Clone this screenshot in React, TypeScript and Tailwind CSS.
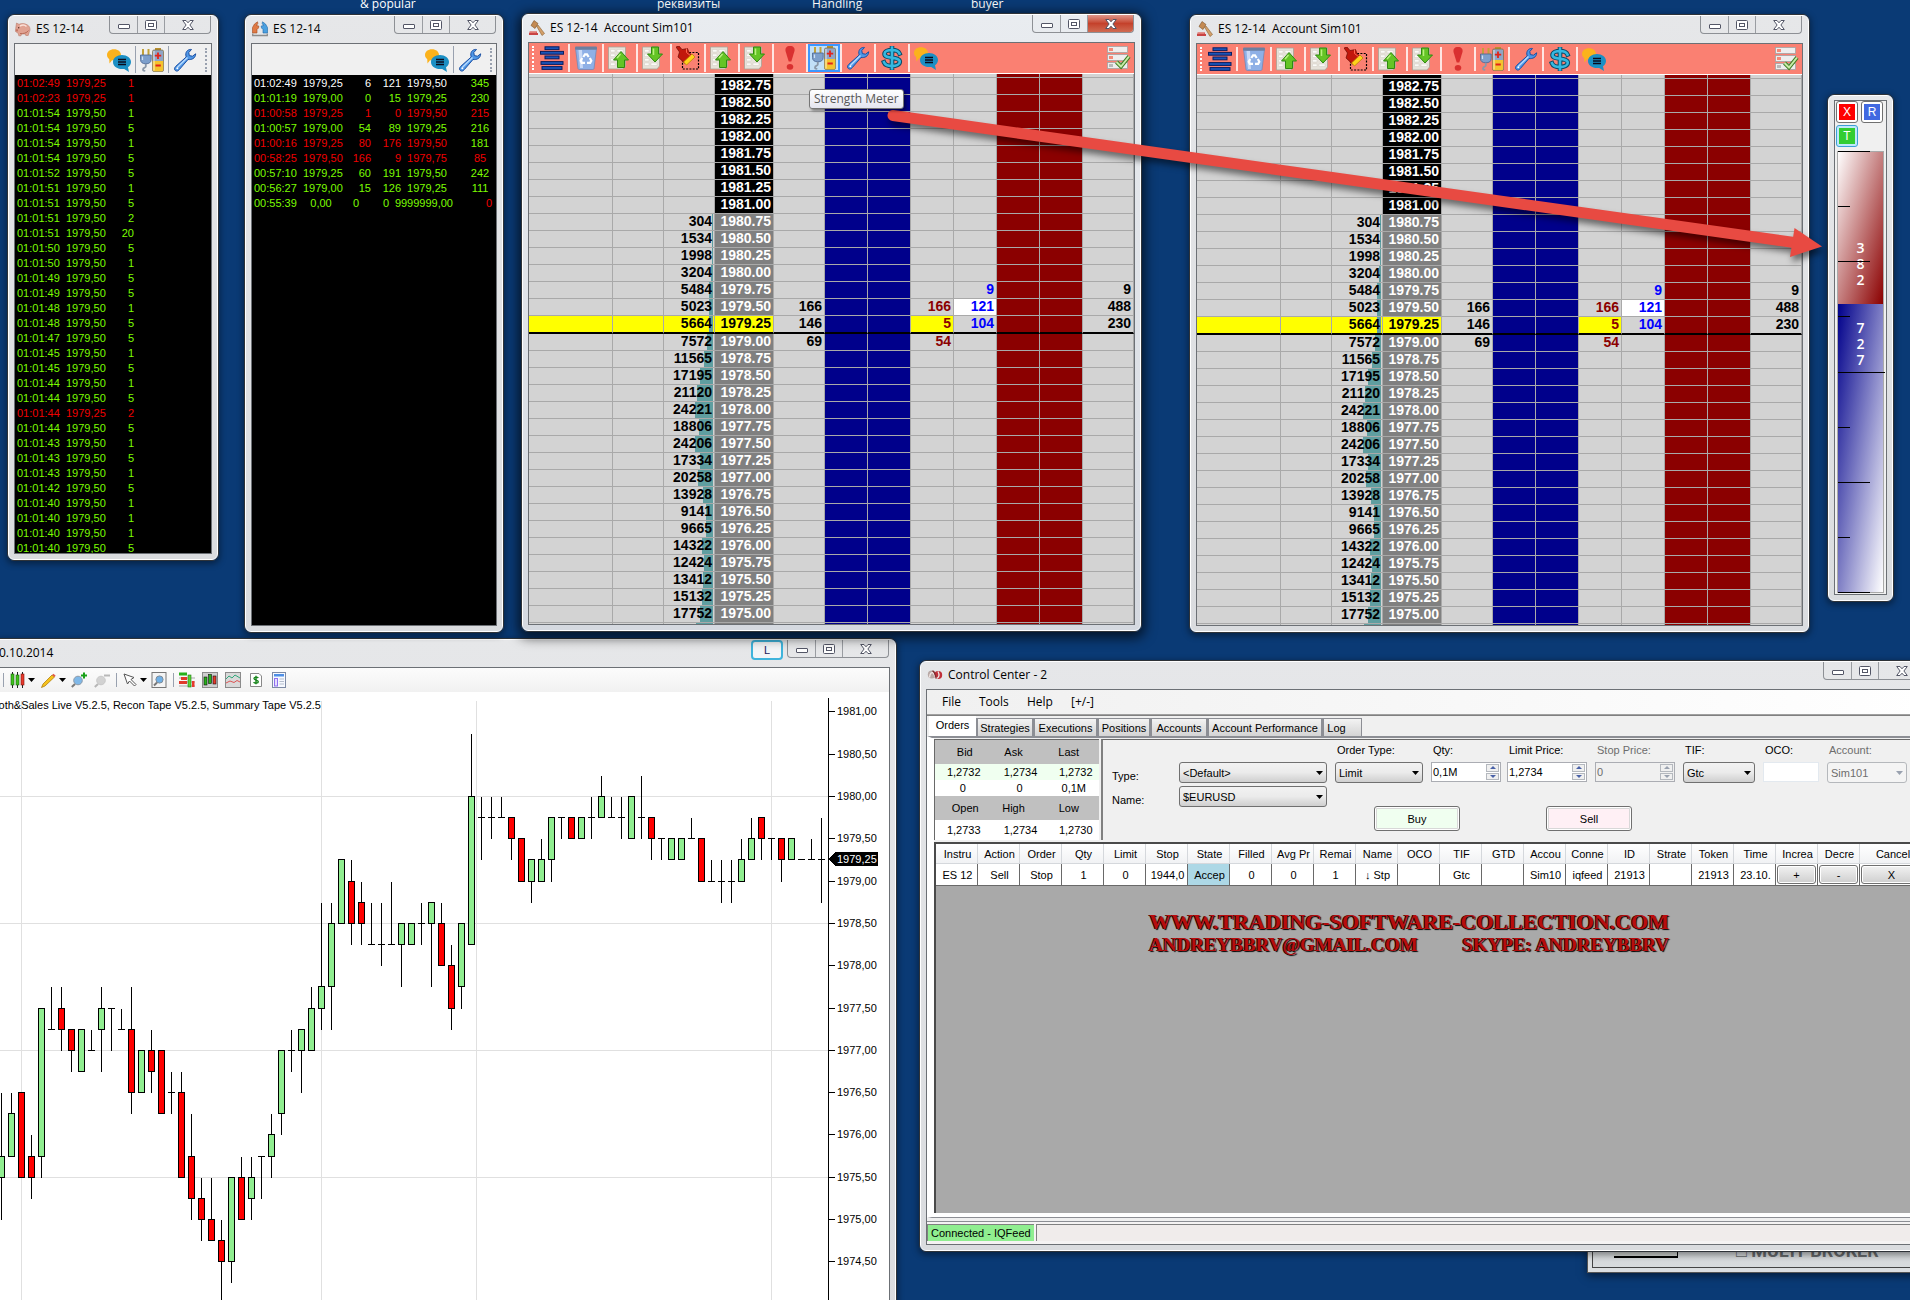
import React from "react";

type IconProps = { className?: string };

/* ---------- icons ---------- */

const Chat = ({ className = "size-6" }: IconProps) => (
  <svg viewBox="0 0 24 24" className={className} aria-hidden="true">
    <path d="M0 7C0 3.500 3 1.200 7 1.200S14 3.500 14 7 11 12.500 7 12.500L5 12.300 2.500 15.500 2.200 11C.8 10 0 8.600 0 7Z" fill="#fbb21c" />
    <path d="M6 14C6 10 10 7 15 7S24 10 24 14C24 16.200 22.800 18 21 19.200L22 24 17.200 20.900C10.500 21.700 6 18.500 6 14Z" fill="#1b8fc4" />
    <path d="M11 11.500H19M11 14H19M11 16.500H19" stroke="#0b0b1c" strokeWidth="1.300" />
  </svg>
);

const PlugBattery = ({ className = "size-6" }: IconProps) => (
  <svg viewBox="0 0 24 24" className={className} aria-hidden="true">
    <path d="M3 1V7M8.500 1V7" stroke="#c2a23a" strokeWidth="2" />
    <path d="M.5 7H11.200V11.500C11.200 14.500 9 15.800 5.800 15.800S.5 14.500.5 11.500Z" fill="#7d9fcb" stroke="#4a6590" strokeWidth=".8" />
    <path d="M2.500 8.500V12" stroke="#cfe0f3" strokeWidth="1.200" />
    <path d="M5.800 16V18.500C5.800 20 3 19 3 21.500C3 23 4.500 23 5 22.300" stroke="#8b98a8" strokeWidth="1.800" fill="none" />
    <rect x="15" y="0" width="6" height="3" fill="#b9902f" />
    <rect x="12.500" y="2" width="11" height="21.500" rx="1.500" fill="#8fa5c6" stroke="#7b6a3b" strokeWidth=".7" />
    <path d="M12.800 13H23.200V22A1.500 1.500 0 0 1 22 23.200H14A1.500 1.500 0 0 1 12.800 22Z" fill="#f4c32e" />
    <path d="M14 3V22.500" stroke="#fff" strokeOpacity=".6" strokeWidth="1.200" />
    <path d="M18 4.500V11M14.800 7.700H21.200M15.500 17.500H20.800" stroke="#e2231a" strokeWidth="1.800" />
  </svg>
);

const Wrench = ({ className = "size-6" }: IconProps) => (
  <svg viewBox="0 0 24 24" className={className} aria-hidden="true">
    <path
      d="M18.500 1.500C15.500 1 12.500 3.200 12.800 7L13.200 9 2.800 18.300C1 20 1.300 21.800 2.400 22.600 3.500 23.400 5 23.300 6.300 21.600L15 11.500C18.500 12 22.500 10.500 22.700 5.800L19.500 8.200 16.300 7.600 15.800 4.500Z"
      fill="#4f97e6"
      stroke="#1b4fa3"
      strokeWidth="1"
    />
    <path d="M14.500 9.500L4.500 19.200" stroke="#b7dbff" strokeWidth="1.500" />
    <circle cx="4.300" cy="20.300" r="1" fill="#fff" />
  </svg>
);

const Rows = () => (
  <svg viewBox="0 0 24 24" className="size-6" aria-hidden="true">
    <g fill="#1a55b8" stroke="#0a1c5e">
      <rect x="5" y=".8" width="14" height="2.800" />
      <rect x=".5" y="5.400" width="23" height="2.800" />
      <rect x="5" y="10" width="14" height="2.800" />
      <rect x="1" y="15.600" width="22" height="2.800" />
      <rect x="2" y="20.600" width="20" height="2.800" />
    </g>
  </svg>
);

const Trash = () => (
  <svg viewBox="0 0 24 24" className="size-6" aria-hidden="true">
    <path d="M1.500 2H22.500L20 22.500Q19.800 23.500 18.500 23.500H5.500Q4.200 23.500 4 22.500Z" fill="#8fb0e6" stroke="#6a85b8" strokeWidth=".7" />
    <path d="M4.500 4H8L9 22H6Z" fill="#c8d9f7" />
    <rect x="1" y=".5" width="22" height="3.200" rx="1" fill="#6d7fa0" />
    <g stroke="#fff" strokeWidth="2.200" fill="none">
      <path d="M9.300 11L11 8.300H13L14.700 11" />
      <path d="M15.800 12L17.300 14.800 16.200 16.800H13" />
      <path d="M11 16.800H7.800L6.700 14.800 8.200 12" />
    </g>
  </svg>
);

const Sheet = ({ down = false }: { down?: boolean }) => (
  <svg viewBox="0 0 24 24" className="size-6" aria-hidden="true">
    <path d="M.5 1H17.500V20L15 23H.5Z" fill="#e6e2da" stroke="#a9a294" strokeWidth=".8" />
    <path d="M2.500 3.500H7V6H2.500ZM2.500 8H7V10.500H2.500ZM2.500 12.500H7V15H2.500ZM2.500 17H7V19.500H2.500ZM9 3.500H15V6H9ZM9 17H15V19.500H9Z" fill="#fbfaf7" stroke="#cbc5ba" strokeWidth=".4" />
    {down ? (
      <path d="M9.500 1H16.500V8H20.500L13 16 5.500 8H9.500Z" fill="#64c425" stroke="#2f8a10" />
    ) : (
      <path d="M9.500 21.500H16.500V14H20.500L13 5.500 5.500 14H9.500Z" fill="#64c425" stroke="#2f8a10" />
    )}
    <path d={down ? "M11.500 2.500V9" : "M12.500 8L9 12"} stroke="#b8f07e" strokeWidth="1.500" />
  </svg>
);

const Brush = () => (
  <svg viewBox="0 0 24 24" className="size-6" aria-hidden="true">
    <rect x="6.500" y="6.500" width="16" height="16.500" fill="none" stroke="#000" strokeWidth="1.200" strokeDasharray="2 1.300" />
    <path d="M0 1L3 0 6 3.500 11.500 2.500 13 6.500 17 10 8.500 17 2 11 3.500 6Z" fill="#c2170c" stroke="#6d0b05" strokeWidth=".7" />
    <path d="M7.500 16L16 8 19 11 10.500 19Z" fill="#ffd21c" stroke="#b27d00" strokeWidth=".7" />
    <path d="M10.500 2.500V6.500L15 10" stroke="#ff6a50" fill="none" />
  </svg>
);

const Bang = () => (
  <svg viewBox="0 0 24 24" className="size-6" aria-hidden="true">
    <path d="M12 0C15.500 0 17 2 16.500 5L13.300 15.500H10.700L7.500 5C7 2 8.500 0 12 0Z" fill="#d93030" />
    <ellipse cx="12" cy="20.800" rx="3.300" ry="2.900" fill="#d93030" />
  </svg>
);

const Dollar = () => (
  <svg viewBox="0 0 24 24" className="size-6" aria-hidden="true">
    <g fill="none" strokeLinecap="square">
      <path d="M12 1.500V22.500M19.500 7.500C18.500 5 15.500 4 12 4 8 4 4.500 5.300 4.500 8 4.500 13.500 19.800 10 19.800 15.800 19.800 18.500 16 20 12 20 8 20 5 18.800 4 16.300" stroke="#0d4a66" strokeWidth="4.600" />
      <path d="M12 1.500V22.500M19.500 7.500C18.500 5 15.500 4 12 4 8 4 4.500 5.300 4.500 8 4.500 13.500 19.800 10 19.800 15.800 19.800 18.500 16 20 12 20 8 20 5 18.800 4 16.300" stroke="#35b8e0" strokeWidth="2.600" />
    </g>
  </svg>
);

const CheckList = () => (
  <svg viewBox="0 0 24 24" className="size-6" aria-hidden="true">
    <g fill="#eee" stroke="#a3a3a3" strokeWidth=".8">
      <rect x=".5" y=".5" width="20" height="6" />
      <rect x=".5" y="8.500" width="20" height="6" />
      <rect x=".5" y="16.500" width="20" height="6" />
    </g>
    <path d="M2 2H6V5H2ZM2 10H6V13H2Z" fill="#f58a78" />
    <path d="M2 18H6V21H2Z" fill="#b8b8b8" />
    <path d="M9.500 16L14 20.500 22 10.500" stroke="#3f7d22" strokeWidth="4" fill="none" />
    <path d="M9.500 16L14 20.500 22 10.500" stroke="#c7eba9" strokeWidth="2" fill="none" />
  </svg>
);

const Gavel = () => (
  <svg viewBox="0 0 16 16" className="size-4" aria-hidden="true">
    <path d="M5 .5L9 3.500 6 8.500 2 5.500Z" fill="#c48a52" stroke="#7c5228" strokeWidth=".6" />
    <path d="M7.500 6L9 5 15.500 13.500 13 15.500Z" fill="#d4a06a" stroke="#8a5f30" strokeWidth=".6" />
    <path d="M.5 11.500H8V13H9V15H0V13H.5Z" fill="#c94444" />
    <path d="M1 11.500H7.500V12.800H1Z" fill="#e98a80" />
  </svg>
);

const Pig = () => (
  <svg viewBox="0 0 16 16" className="size-4" aria-hidden="true">
    <path d="M.8 6.500L1.500 2 4 3.300C6 2.200 10 2.300 12.500 4 15.300 5.700 15.600 9 14.200 11.300L13.200 14.500H10.800L10.300 13H6.500L6 14.800H3.800L3.200 12.300 .5 10.500Z" fill="#e0a292" stroke="#b3705e" strokeWidth=".5" />
    <path d="M5 5C7 4 10 4 11.500 5.500" stroke="#fae0d8" strokeWidth="1.500" fill="none" />
    <path d="M5 12.500C8 13 12 12 13.500 9.500" stroke="#b96c58" fill="none" />
    <circle cx="3.700" cy="6.800" r=".7" fill="#502a20" />
    <path d="M.8 8.300H3V10.300H.8Z" fill="#c47563" />
  </svg>
);

const Hands = () => (
  <svg viewBox="0 0 16 16" className="size-4" aria-hidden="true">
    <path d="M.5 12V6.500L2.500 3 5.500 .8 5.800 2.500 4.500 4.500 6.800 5 6.500 7 5 8.500V12Z" fill="#e07a45" stroke="#a14a20" strokeWidth=".6" />
    <path d="M15.500 12V6.500L13.500 3 10.500 .8 10.200 2.500 11.500 4.500 9.200 5 9.500 7 11 8.500V12Z" fill="#4aa0e0" stroke="#1f66a6" strokeWidth=".6" />
    <path d="M.7 12.500V14.500H15.300V12.500" stroke="#8c8c8c" strokeWidth="1.300" fill="none" />
  </svg>
);

const Swirl = () => (
  <svg viewBox="0 0 16 16" className="size-4" aria-hidden="true">
    <ellipse cx="4.800" cy="7.500" rx="4" ry="4" fill="#b9a9a6" />
    <ellipse cx="11.200" cy="8" rx="4" ry="4" fill="#c0303a" />
    <path d="M2.500 10.500C3 6 5 4.500 6.500 6.500 8 9 8.500 12 10.500 11 12.500 9.500 12 6.500 11 4.500" stroke="#f2e6e4" strokeWidth="1.300" fill="none" />
    <path d="M5.500 3.800C8 4.500 8 8 9.300 11.500" stroke="#7c2a2e" strokeWidth="1.300" fill="none" />
  </svg>
);

const Caret = ({ className = "fill-black" }: IconProps) => (
  <svg viewBox="0 0 7 4" className={"h-1 w-[7px] " + className} aria-hidden="true">
    <path d="M0 0H7L3.500 4Z" />
  </svg>
);

/* ---------- window frame ---------- */

function CaptionButtons({ active = false }: { active?: boolean }) {
  return (
    <div className="mr-px flex h-[18px] shrink-0 self-start overflow-hidden rounded-b border border-t-0 border-[#8d9095]">
      <button aria-label="Minimize" className="flex w-7 items-end justify-center border-r border-[#9a9da2] pb-1">
        <span className="h-[5px] w-3 rounded-[1px] border border-[#535666] bg-white" />
      </button>
      <button aria-label="Maximize" className="flex w-[27px] items-center justify-center border-r border-[#9a9da2]">
        <svg viewBox="0 0 12 10" className="h-[10px] w-3" aria-hidden="true">
          <rect x=".5" y=".5" width="11" height="9" rx="1" fill="#fff" stroke="#535666" />
          <rect x="3.500" y="3.500" width="5" height="3" fill="#fff" stroke="#535666" />
        </svg>
      </button>
      <button
        aria-label="Close"
        className={
          active
            ? "flex w-[45px] items-center justify-center bg-linear-to-b from-[#e0968a] via-[#c4412b] via-50% to-[#cf6a52]"
            : "flex w-[45px] items-center justify-center"
        }
      >
        <svg viewBox="0 0 12 10" className="h-[10px] w-3" aria-hidden="true">
          <path d="M.7.500H4L6 2.800 8 .5H11.300L7.900 5 11.300 9.500H8L6 7.200 4 9.500H.7L4.100 5Z" fill="#fff" stroke="#535666" />
        </svg>
      </button>
    </div>
  );
}

type FrameProps = {
  place: string;
  title?: string;
  icon?: React.ReactNode;
  active?: boolean;
  extra?: React.ReactNode;
  bare?: boolean;
  children: React.ReactNode;
};

function Frame({ place, title, icon, active, extra, bare, children }: FrameProps) {
  return (
    <section
      className={
        "absolute rounded-[7px] border border-[#2f3338] " +
        (active ? "shadow-[0_3px_12px_3px_rgba(0,0,0,0.65)] " : "shadow-[0_2px_6px_1px_rgba(0,0,0,0.4)] ") +
        place
      }
    >
      <div
        className={
          "flex h-full flex-col rounded-md border border-white px-[5px] pb-[5px] " +
          (active ? "bg-linear-to-b from-[#e9ecf0] to-[#d5d9e0]" : "bg-linear-to-b from-[#e6e7e9] to-[#dadcdf]")
        }
      >
        {bare ? (
          <div className="h-1 shrink-0" />
        ) : (
          <header className="flex h-[27px] shrink-0 items-center gap-[5px] pb-[2px]">
            {icon && <span className="pl-px">{icon}</span>}
            <h2 className="grow whitespace-pre text-xs text-black [font-family:'Open_Sans',sans-serif]">{title}</h2>
            {extra}
            <CaptionButtons active={active} />
          </header>
        )}
        <div className="flex min-h-0 grow flex-col overflow-hidden border border-[#6c7075]">{children}</div>
      </div>
    </section>
  );
}

/* ---------- tape windows ---------- */

const Grip = ({ className = "border-gray-400" }: IconProps) => (
  <span className={"h-6 w-0 border-l-2 border-dotted " + className} />
);

const TIMES: [string, string, number][] = [
  ["01:02:49", "1979,25", 1], ["01:02:23", "1979,25", 1], ["01:01:54", "1979,50", 1], ["01:01:54", "1979,50", 5],
  ["01:01:54", "1979,50", 1], ["01:01:54", "1979,50", 5], ["01:01:52", "1979,50", 5], ["01:01:51", "1979,50", 1],
  ["01:01:51", "1979,50", 5], ["01:01:51", "1979,50", 2], ["01:01:51", "1979,50", 20], ["01:01:50", "1979,50", 5],
  ["01:01:50", "1979,50", 1], ["01:01:49", "1979,50", 5], ["01:01:49", "1979,50", 5], ["01:01:48", "1979,50", 1],
  ["01:01:48", "1979,50", 5], ["01:01:47", "1979,50", 5], ["01:01:45", "1979,50", 1], ["01:01:45", "1979,50", 5],
  ["01:01:44", "1979,50", 1], ["01:01:44", "1979,50", 5], ["01:01:44", "1979,25", 2], ["01:01:44", "1979,50", 5],
  ["01:01:43", "1979,50", 1], ["01:01:43", "1979,50", 5], ["01:01:43", "1979,50", 1], ["01:01:42", "1979,50", 5],
  ["01:01:40", "1979,50", 1], ["01:01:40", "1979,50", 1], ["01:01:40", "1979,50", 1], ["01:01:40", "1979,50", 5],
];

function SalesTape() {
  return (
    <Frame place="left-[7px] top-[14px] h-[547px] w-[212px]" title="ES 12-14" icon={<Pig />}>
      <div className="flex h-[31px] shrink-0 items-center justify-end bg-[#f0f0f0] pr-1">
        <button aria-label="Messages"><Chat /></button>
        <span className="mx-1 h-[27px] w-px bg-gray-400" />
        <button aria-label="Strength Meter"><PlugBattery /></button>
        <span className="mx-1 h-[27px] w-px bg-gray-400" />
        <button aria-label="Settings" className="mr-2"><Wrench /></button>
        <Grip />
      </div>
      <div className="grow overflow-hidden bg-black pt-px text-[11px] leading-[15px] [font-family:'Liberation_Sans',sans-serif]">
        <table>
          <tbody>
            {TIMES.map(([time, price, qty], i) => (
              <tr key={i} className={price === "1979,25" ? "text-[#f00000]" : "text-[#7cfc00]"}>
                <td className="w-[51px] p-0 pl-[2px]">{time}</td>
                <td className="w-10 p-0">{price}</td>
                <td className="w-7 p-0 text-right">{qty}</td>
              </tr>
            ))}
          </tbody>
        </table>
      </div>
    </Frame>
  );
}

const RECON: [string, string, string, string, string, string, string, string][] = [
  ["01:02:49", "1979,25", "6", "121", "1979,50", "345", "text-white", "text-[#7cfc00]"],
  ["01:01:19", "1979,00", "0", "15", "1979,25", "230", "text-[#7cfc00]", "text-[#7cfc00]"],
  ["01:00:58", "1979,25", "1", "0", "1979,50", "215", "text-[#f00000]", "text-[#f00000]"],
  ["01:00:57", "1979,00", "54", "89", "1979,25", "216", "text-[#7cfc00]", "text-[#7cfc00]"],
  ["01:00:16", "1979,25", "80", "176", "1979,50", "181", "text-[#f00000]", "text-[#7cfc00]"],
  ["00:58:25", "1979,50", "166", "9", "1979,75", "85", "text-[#f00000]", "text-[#f00000]"],
  ["00:57:10", "1979,25", "60", "191", "1979,50", "242", "text-[#7cfc00]", "text-[#7cfc00]"],
  ["00:56:27", "1979,00", "15", "126", "1979,25", "111", "text-[#7cfc00]", "text-[#7cfc00]"],
];

function ReconTape() {
  return (
    <Frame place="left-[244px] top-[14px] h-[619px] w-[260px]" title="ES 12-14" icon={<Hands />}>
      <div className="flex h-[31px] shrink-0 items-center justify-end bg-[#f0f0f0] pr-1">
        <button aria-label="Messages"><Chat /></button>
        <span className="mx-1 h-[27px] w-px bg-gray-400" />
        <button aria-label="Settings" className="mr-2"><Wrench /></button>
        <Grip />
      </div>
      <div className="grow overflow-hidden bg-black pt-px text-[11px] leading-[15px] [font-family:'Liberation_Sans',sans-serif]">
        <table className="w-full table-fixed">
          <colgroup>
            <col className="w-[51px]" />
            <col className="w-10" />
            <col className="w-7" />
            <col className="w-[30px]" />
            <col className="w-[52px]" />
            <col />
          </colgroup>
          <tbody>
            {RECON.map((r, i) => (
              <tr key={i} className={r[6]}>
                <td className="p-0 pl-[2px]">{r[0]}</td>
                <td className="p-0">{r[1]}</td>
                <td className="p-0 text-right">{r[2]}</td>
                <td className="p-0 text-right">{r[3]}</td>
                <td className="p-0 text-center">{r[4]}</td>
                <td className={"p-0 pl-[11px] text-center " + r[7]}>{r[5]}</td>
              </tr>
            ))}
            <tr className="text-[#7cfc00]">
              <td className="p-0 pl-[2px]">00:55:39</td>
              <td className="p-0 pr-1 text-center">0,00</td>
              <td className="p-0 pr-3 text-right">0</td>
              <td className="p-0 pr-3 text-right">0</td>
              <td className="p-0"><div className="flex justify-end">9999999,00</div></td>
              <td className="p-0 pr-1 text-right text-[#f00000]">0</td>
            </tr>
          </tbody>
        </table>
      </div>
    </Frame>
  );
}

/* ---------- price ladder ---------- */

const VOLUMES = [
  0, 0, 0, 0, 0, 0, 0, 0, 304, 1534, 1998, 3204, 5484, 5023, 5664, 7572, 11565, 17195, 21120, 24221, 18806, 24206,
  17334, 20258, 13928, 9141, 9665, 14322, 12424, 13412, 15132, 17752,
];
const LAST_TRADES: Record<number, string> = { 13: "166", 14: "146", 15: "69" };
const BIDS: Record<number, string> = { 13: "166", 14: "5", 15: "54" };
const ASKS: Record<number, string> = { 12: "9", 13: "121", 14: "104" };
const TOTALS: Record<number, string> = { 12: "9", 13: "488", 14: "230" };

function LadderRow({ i }: { i: number }) {
  const edge = i < 0 || i >= VOLUMES.length;
  const current = i === 14;
  const cell =
    "border-r border-r-[#a9a9a9] px-[2px] pt-0 text-right " +
    (i < 0 ? "h-1 pb-0 " : "h-[17px] pb-[2px] ") +
    (current ? "border-b-2 border-b-black " : "border-b border-b-[#a9a9a9] ");
  const highlight = current ? "bg-[#ffff00] " : "";
  const price = edge ? "" : (1982.75 - i * 0.25).toFixed(2);
  const volume = edge ? 0 : VOLUMES[i];
  const bar = i >= VOLUMES.length ? 17 : volume ? Math.max(1, Math.round(volume / 1345)) : 0;
  const priceTone = current ? "bg-[#ffff00] text-black" : i < 8 ? "bg-black text-white" : "bg-[#808080] text-white";
  return (
    <tr>
      <td className={cell + highlight} />
      <td className={cell + highlight} />
      <td className={cell + highlight + "relative"}>
        <span className="absolute inset-y-0 right-px bg-[#5f9ea0]" style={{ width: bar }} />
        <span className="relative">{volume || ""}</span>
      </td>
      <td className={cell + priceTone}>{price}</td>
      <td className={cell}>{LAST_TRADES[i]}</td>
      <td className={cell + "bg-[#00008b]"} />
      <td className={cell + "bg-[#00008b]"} />
      <td className={cell + highlight + "text-[#8b0000]"}>{BIDS[i]}</td>
      <td className={cell + "text-[#0000ff] " + (i === 13 ? "bg-white" : "")}>{ASKS[i]}</td>
      <td className={cell + "bg-[#8b0000]"} />
      <td className={cell + "bg-[#8b0000]"} />
      <td className={cell}>{TOTALS[i]}</td>
    </tr>
  );
}

function Ladder({ place, active = false }: { place: string; active?: boolean }) {
  const tools: [string, React.ReactNode][] = [
    ["Center", <Rows />],
    ["Clear", <Trash />],
    ["Page up", <Sheet />],
    ["Page down", <Sheet down />],
    ["Brush", <Brush />],
    ["Scroll up", <Sheet />],
    ["Scroll down", <Sheet down />],
    ["Alert", <Bang />],
    ["Strength Meter", <PlugBattery />],
    ["Settings", <Wrench />],
    ["Account", <Dollar />],
    ["Messages", <Chat />],
  ];
  return (
    <Frame place={place} title="ES 12-14  Account Sim101" icon={<Gavel />} active={active}>
      <div className="flex h-[31px] shrink-0 items-center border-b border-white bg-[#fa8072] px-[3px]">
        <Grip className="border-white" />
        <div className="flex grow pl-[2px]">
          {tools.map(([label, icon], i) => (
            <div key={label} className={i ? "flex items-center border-l-2 border-white/80" : "flex items-center"}>
              <button
                aria-label={label}
                className={
                  active && label === "Strength Meter"
                    ? "relative flex h-7 w-8 items-center justify-center border-2 border-[#3b97ff] bg-[#c2e0f8]"
                    : "flex h-6 w-8 items-center justify-center"
                }
              >
                {icon}
                {active && label === "Strength Meter" && (
                  <span
                    role="tooltip"
                    className="absolute -left-px top-[43px] z-20 flex h-5 items-center whitespace-nowrap rounded-[3px] border border-[#767676] bg-linear-to-b from-white to-[#e4e5f0] px-1 text-xs text-[#575757] shadow-[2px_2px_3px_rgba(0,0,0,0.4)] [font-family:'Open_Sans',sans-serif]"
                  >
                    Strength Meter
                  </span>
                )}
              </button>
            </div>
          ))}
        </div>
        <button aria-label="Order list"><CheckList /></button>
      </div>
      <div className="min-h-0 grow overflow-hidden bg-[#d3d3d3]">
        <table className="w-full table-fixed border-separate border-spacing-0 text-sm font-bold leading-[14px] text-black [font-family:'Liberation_Sans',sans-serif]">
          <colgroup>
            <col className="w-[84px]" />
            <col className="w-[51px]" />
            <col className="w-[51px]" />
            <col className="w-[59px]" />
            <col className="w-[51px]" />
            <col className="w-[43px]" />
            <col className="w-[43px]" />
            <col className="w-[43px]" />
            <col className="w-[43px]" />
            <col className="w-[43px]" />
            <col className="w-[43px]" />
            <col />
          </colgroup>
          <tbody>
            {Array.from({ length: VOLUMES.length + 2 }, (_, k) => (
              <LadderRow key={k} i={k - 1} />
            ))}
          </tbody>
        </table>
      </div>
    </Frame>
  );
}

/* ---------- strength meter ---------- */

const TICKS = [32, 12, 32, 12, 47, 12, 32, 12, 32];

function StrengthMeter() {
  const key = "flex h-[22px] w-[22px] items-center justify-center rounded-[3px] border p-[2px] ";
  return (
    <Frame place="left-[1827px] top-[94px] h-[508px] w-[67px]" bare>
      <div className="flex grow flex-col bg-[#f0f0f0] px-px pb-px text-xs leading-4 text-white [font-family:'Liberation_Sans',sans-serif]">
        <div className="mb-1 flex flex-wrap gap-x-[3px] gap-y-[2px]">
          <button className={key + "border-[#707070] bg-white"}><span className="size-full bg-[#ff0000]">X</span></button>
          <button className={key + "border-[#707070] bg-white"}><span className="size-full bg-[#4169e1]">R</span></button>
          <button className={key + "border-[#3c9fd6] bg-[#bfe8fb]"}><span className="size-full bg-[#32cd32]">T</span></button>
        </div>
        <div className="relative mx-px flex grow flex-col border border-[#a9a9a9] text-center text-sm font-semibold leading-4 [font-family:'Open_Sans',sans-serif]">
          <div className="flex h-[152px] flex-col justify-end bg-linear-to-br/srgb from-white to-[#8b0000] pb-4">
            <span>3</span>
            <span>8</span>
            <span>2</span>
          </div>
          <div className="flex grow flex-col bg-linear-to-br/srgb from-[#00008b] to-white pt-4">
            <span>7</span>
            <span>2</span>
            <span>7</span>
          </div>
          <div className="absolute -inset-y-px left-0 flex flex-col justify-between">
            {TICKS.map((w, i) => (
              <span key={i} className="h-px bg-black" style={{ width: w }} />
            ))}
          </div>
        </div>
      </div>
    </Frame>
  );
}

/* ---------- candle chart ---------- */

/* [high, low, body top, body bottom, colour], quarter points below 1980,00 */
type Candle = [number, number, number, number, "g" | "r" | "d"];
const CANDLES: Candle[] = [
  [14, 20, 17, 18, "g"], [14, 17, 15, 17, "g"], [14, 18, 14, 18, "r"], [16, 19, 17, 18, "r"], [10, 18, 10, 17, "g"],
  [9, 11, 11, 11, "d"], [9, 12, 10, 11, "r"], [11, 13, 11, 12, "r"], [11, 13, 11, 13, "g"], [11, 12, 12, 12, "d"],
  [9, 13, 10, 11, "g"], [10, 12, 10, 10, "d"], [10, 11, 11, 11, "d"], [9, 15, 11, 14, "r"], [12, 14, 12, 14, "g"],
  [11, 14, 12, 13, "r"], [12, 15, 12, 15, "r"], [13, 15, 14, 14, "d"], [13, 18, 14, 18, "r"], [15, 20, 17, 19, "r"],
  [18, 21, 19, 20, "r"], [18, 21, 20, 21, "r"], [20, 24, 21, 22, "r"], [18, 23, 18, 22, "g"], [17, 20, 18, 20, "r"],
  [17, 20, 18, 19, "g"], [17, 19, 17, 17, "d"], [15, 18, 16, 17, "g"], [12, 16, 12, 15, "g"], [11, 13, 12, 12, "d"],
  [11, 14, 11, 12, "g"], [9, 12, 10, 12, "g"], [5, 11, 9, 10, "g"], [5, 11, 6, 9, "g"], [3, 6, 3, 6, "g"],
  [3, 7, 4, 6, "r"], [4, 7, 5, 6, "r"], [5, 7, 7, 7, "d"], [5, 8, 7, 7, "d"], [4, 7, 7, 7, "d"],
  [6, 9, 6, 7, "g"], [6, 7, 6, 7, "g"], [5, 7, 6, 6, "d"], [5, 9, 5, 6, "g"], [5, 8, 6, 8, "r"],
  [7, 11, 8, 10, "r"], [6, 10, 6, 9, "g"], [-3, 7, 0, 7, "g"], [0, 3, 1, 1, "d"], [0, 2, 1, 1, "d"],
  [0, 1, 1, 1, "d"], [1, 3, 1, 2, "r"], [2, 4, 2, 4, "r"], [3, 5, 3, 4, "g"], [2, 4, 3, 4, "g"],
  [1, 4, 1, 3, "g"], [1, 2, 1, 1, "d"], [1, 2, 1, 2, "r"], [1, 2, 1, 2, "g"], [0, 2, 1, 1, "d"],
  [-1, 1, 0, 1, "g"], [0, 1, 1, 1, "d"], [0, 2, 1, 1, "d"], [0, 2, 0, 2, "g"], [-1, 2, 1, 1, "d"],
  [1, 3, 1, 2, "r"], [2, 3, 2, 2, "d"], [2, 3, 2, 3, "g"], [2, 3, 2, 3, "g"], [1, 2, 2, 2, "d"],
  [2, 4, 2, 4, "r"], [3, 4, 4, 4, "d"], [3, 5, 4, 4, "d"], [3, 5, 4, 4, "d"], [2, 4, 3, 4, "g"],
  [1, 3, 2, 3, "g"], [1, 3, 1, 2, "r"], [2, 3, 2, 2, "d"], [2, 4, 2, 3, "r"], [2, 3, 2, 3, "g"],
  [3, 3, 3, 3, "d"], [2, 3, 3, 3, "d"], [1, 5, 3, 3, "d"],
];
const yAt = (quarters: number) => Math.round(104 + quarters * 21.15) + 0.5;

function ChartPlot() {
  const labels = Array.from({ length: 14 }, (_, k) => 1981 - k * 0.5);
  return (
    <svg className="h-[608px] w-full" aria-label="ES 12-14 price chart" shapeRendering="crispEdges">
      <g stroke="#e0e0e0">
        {[0, 6, 12, 18].map((q) => (
          <line key={q} x1="0" x2="829" y1={yAt(q)} y2={yAt(q)} />
        ))}
        {[21.5, 321.5, 476.5, 771.5].map((x) => (
          <line key={x} x1={x} x2={x} y1="9" y2="608" />
        ))}
      </g>
      {CANDLES.map(([h, l, t, b, c], i) => {
        const x = 1.5 + i * 10;
        return (
          <g key={i} stroke="#000">
            {h !== l && <line x1={x} x2={x} y1={yAt(h)} y2={yAt(l)} />}
            {c === "d" ? (
              <line x1={x - 3.5} x2={x + 3.5} y1={yAt(t)} y2={yAt(t)} />
            ) : (
              <rect x={x - 3} y={yAt(t)} width="6" height={yAt(b) - yAt(t)} fill={c === "g" ? "#90ee90" : "#ff0000"} />
            )}
          </g>
        );
      })}
      <line x1="828.5" x2="828.5" y1="6" y2="608" stroke="#000" />
      <g fontSize="11" fontFamily="'Liberation Sans', sans-serif">
        {labels.map((p) => (
          <g key={p}>
            <line x1="829" x2="835" y1={yAt((1980 - p) * 4)} y2={yAt((1980 - p) * 4)} stroke="#000" />
            <text x="837" y={yAt((1980 - p) * 4) + 3.5}>{p.toFixed(2).replace(".", ",")}</text>
          </g>
        ))}
        <path d="M829 167L835 160H878V174H835Z" fill="#000" />
        <text x="837" y="171" fill="#fff">1979,25</text>
      </g>
    </svg>
  );
}

const ChartTools = () => (
  <div className="flex h-6 shrink-0 items-center bg-linear-to-b from-[#fcfcfc] to-[#f1f1f1] pl-[3px] text-black">
    <span className="h-[14px] w-px bg-gray-400" />
    <button aria-label="Chart style" className="ml-[6px] flex items-center gap-[3px]">
      <svg viewBox="0 0 15 16" className="h-4 w-[15px]" aria-hidden="true">
        <path d="M2.500 0V16M7.500 0V16M12.500 0V16" stroke="#222" />
        <rect x="1" y="2" width="3" height="11" fill="#3fc21c" stroke="#14600a" strokeWidth=".6" />
        <rect x="6" y="3" width="3" height="10" fill="#3fc21c" stroke="#14600a" strokeWidth=".6" />
        <rect x="11" y="2" width="3" height="11" fill="#e8392c" stroke="#7c120a" strokeWidth=".6" />
      </svg>
      <Caret className="w-[5px] fill-black" />
    </button>
    <button aria-label="Draw" className="ml-[6px] flex items-center gap-[3px]">
      <svg viewBox="0 0 15 15" className="size-[15px]" aria-hidden="true">
        <path d="M.5 14.500L2 11 11 2 13.500 4 4 13Z" fill="#f6c21c" stroke="#a87400" strokeWidth=".7" />
        <path d="M11 2L12.500 .7 14.700 2.700 13.500 4Z" fill="#e0584a" />
      </svg>
      <Caret />
    </button>
    {[true, false].map((plus) => (
      <button key={String(plus)} aria-label={plus ? "Zoom in" : "Zoom out"} className={plus ? "ml-[5px]" : "ml-[7px] opacity-50 grayscale"}>
        <svg viewBox="0 0 16 16" className="size-4" aria-hidden="true">
          <circle cx="7" cy="8.500" r="4.300" fill="#7fb8e8" stroke="#8d9aa8" />
          <path d="M4 12L.8 15" stroke="#7a7a7a" strokeWidth="2" />
          <path d={plus ? "M13 .5V6.500M10 3.500H16" : "M10 3.500H16"} stroke="#18a018" strokeWidth="2" />
        </svg>
      </button>
    ))}
    <span className="ml-[6px] h-[14px] w-px bg-gray-400" />
    <button aria-label="Pointer" className="ml-[6px] flex items-center gap-[3px]">
      <svg viewBox="0 0 14 14" className="size-[14px]" aria-hidden="true">
        <path d="M1 1L11 4.500 8 6.500 13 11.500 11.500 13 6.500 8 4.500 11Z" fill="#fff" stroke="#555" />
      </svg>
      <Caret />
    </button>
    <button aria-label="Data box" className="ml-1">
      <svg viewBox="0 0 16 16" className="size-4" aria-hidden="true">
        <rect x="1" y=".5" width="14" height="15" fill="#f4f4f4" stroke="#777" />
        <circle cx="8.500" cy="7.500" r="3.600" fill="#6fb0e6" stroke="#7e8c9a" />
        <path d="M6 10.500L3 13.500" stroke="#777" strokeWidth="2" />
      </svg>
    </button>
    <span className="ml-[6px] h-[14px] w-px bg-gray-400" />
    <div className="ml-[5px] flex gap-[7px]">
      <button aria-label="Depth">
        <svg viewBox="0 0 16 16" className="size-4" aria-hidden="true">
          <path d="M0 6H16M0 10H16M0 14H16" stroke="#aaa" />
          <path d="M0 2H8" stroke="#27b11b" strokeWidth="3" />
          <path d="M2 6.500H8M0 10.500H8" stroke="#e03a2c" strokeWidth="3" />
          <rect x="9" y="3" width="3" height="12" fill="#5bd334" stroke="#1c7a12" strokeWidth=".6" />
          <rect x="13" y="9" width="2.500" height="6" fill="#e8392c" />
        </svg>
      </button>
      <button aria-label="Indicators">
        <svg viewBox="0 0 16 16" className="size-4" aria-hidden="true">
          <rect x=".5" y=".5" width="15" height="15" fill="#cfcfcf" stroke="#8b8b8b" />
          <rect x="2" y="5" width="3" height="8" fill="#27b11b" stroke="#111" strokeWidth=".6" />
          <rect x="6.500" y="2.500" width="3" height="9" fill="#27b11b" stroke="#111" strokeWidth=".6" />
          <rect x="11" y="4" width="3" height="8" fill="#e8392c" stroke="#111" strokeWidth=".6" />
        </svg>
      </button>
      <button aria-label="Strategies">
        <svg viewBox="0 0 16 16" className="size-4" aria-hidden="true">
          <rect x=".5" y=".5" width="15" height="15" fill="#d9d9d9" stroke="#8b8b8b" />
          <path d="M1 7L4 4 7 6 10 3 15 6" stroke="#2fa87a" fill="none" />
          <path d="M1 11L5 9 9 10.500 12 8.500 15 10" stroke="#dd5555" fill="none" />
        </svg>
      </button>
      <button aria-label="Account">
        <svg viewBox="0 0 16 16" className="size-4" aria-hidden="true">
          <path d="M2.500 1.500H11L13.500 4V14.500H2.500Z" fill="#fff" stroke="#888" />
          <path d="M10.300 6C9.800 5.200 6 4.600 6 6.500S10.300 8 10.300 9.700 6.500 11.500 5.600 10.200M8 3.800V12.300" stroke="#16851a" strokeWidth="1.400" fill="none" />
        </svg>
      </button>
      <button aria-label="Properties">
        <svg viewBox="0 0 16 16" className="size-4" aria-hidden="true">
          <rect x="1.500" y=".5" width="13" height="15" fill="#f6f9ff" stroke="#7d8aa5" />
          <rect x="3" y="2" width="10" height="2.500" fill="#4f8fe6" />
          <rect x="3.500" y="6.500" width="3" height="7.500" fill="#e6defc" stroke="#8d6ff0" />
          <path d="M8.500 7H13M8.500 9.500H13M8.500 12H13" stroke="#b5bdcc" />
        </svg>
      </button>
    </div>
  </div>
);

function ChartWindow() {
  return (
    <Frame
      place="left-[-8px] top-[638px] h-[690px] w-[905px]"
      title="0.10.2014"
      extra={
        <button className="-mr-px h-5 w-8 shrink-0 self-start rounded-sm border-2 border-[#3fb4dc] bg-[#f3f5f7] text-[11px] leading-4 text-[#1a1a5a] [font-family:'Liberation_Sans',sans-serif]">
          L
        </button>
      }
    >
      <ChartTools />
      <div className="relative grow bg-white">
        <div className="absolute left-0 top-[5px] flex w-[321px] justify-end whitespace-nowrap text-[11px] leading-4 text-black [font-family:'Liberation_Sans',sans-serif]">
          oth&amp;Sales Live V5.2.5, Recon Tape V5.2.5, Summary Tape V5.2.5
        </div>
        <ChartPlot />
      </div>
    </Frame>
  );
}

/* ---------- control center ---------- */

function Dropdown({ id, width, value, disabled }: { id: string; width: string; value: string; disabled?: boolean }) {
  return (
    <div className={"relative " + width}>
      <select
        id={id}
        disabled={disabled}
        defaultValue={value}
        className={
          disabled
            ? "h-[21px] w-full appearance-none rounded-[3px] border border-[#b5b8bc] bg-[#f4f4f4] pl-[3px] text-[#6d6d6d] opacity-100"
            : "h-[21px] w-full appearance-none rounded-[3px] border border-[#707070] bg-linear-to-b from-[#f2f2f2] via-[#ebebeb] via-50% to-[#cfcfcf] pl-[3px] text-black"
        }
      >
        <option>{value}</option>
      </select>
      <span className="pointer-events-none absolute right-1 top-[9px]">
        <Caret className={disabled ? "fill-gray-400" : "fill-black"} />
      </span>
    </div>
  );
}

function Spinner({ id, width, value, disabled }: { id: string; width: string; value: string; disabled?: boolean }) {
  const tone = disabled ? "fill-gray-400" : "fill-[#4a62a8]";
  return (
    <div className={"flex h-5 border border-[#abadb3] " + width + (disabled ? " bg-[#f0f0f0]" : " bg-white")}>
      <input
        id={id}
        disabled={disabled}
        defaultValue={value}
        className={"w-0 grow bg-transparent pl-px outline-none " + (disabled ? "text-[#6d6d6d]" : "text-black")}
      />
      <div className="flex w-[15px] flex-col gap-px p-px">
        <button aria-label="Increase" disabled={disabled} className="flex h-2 items-center justify-center border border-[#b4b8be] bg-[#f0f0f0]">
          <svg viewBox="0 0 6 3" className={"h-[3px] w-[6px] " + tone} aria-hidden="true"><path d="M0 3H6L3 0Z" /></svg>
        </button>
        <button aria-label="Decrease" disabled={disabled} className="flex h-2 items-center justify-center border border-[#b4b8be] bg-[#f0f0f0]">
          <svg viewBox="0 0 6 3" className={"h-[3px] w-[6px] " + tone} aria-hidden="true"><path d="M0 0H6L3 3Z" /></svg>
        </button>
      </div>
    </div>
  );
}

function Field({ id, label, muted, children }: { id: string; label: string; muted?: boolean; children: React.ReactNode }) {
  return (
    <div className="flex flex-col gap-1">
      <label htmlFor={id} className={"pl-[2px] leading-4 " + (muted ? "text-[#6d6d6d]" : "")}>{label}</label>
      {children}
    </div>
  );
}

const TABS: [string, string][] = [
  ["Orders", "w-[47px]"], ["Strategies", "w-[57px]"], ["Executions", "w-16"], ["Positions", "w-[53px]"],
  ["Accounts", "w-[57px]"], ["Account Performance", "w-[115px]"], ["Log", "w-10"],
];

const ORDER: [string, string][] = [
  ["Instru", "ES 12"], ["Action", "Sell"], ["Order", "Stop"], ["Qty", "1"], ["Limit", "0"], ["Stop", "1944,0"],
  ["State", "Accep"], ["Filled", "0"], ["Avg Pr", "0"], ["Remai", "1"], ["Name", "↓ Stp"], ["OCO", ""], ["TIF", "Gtc"],
  ["GTD", ""], ["Accou", "Sim10"], ["Conne", "iqfeed"], ["ID", "21913"], ["Strate", ""], ["Token", "21913"],
  ["Time", "23.10."], ["Increa", "+"], ["Decre", "-"], ["Cancel", "X"],
];

function Quotes() {
  const head = "bg-[#c0c0c0] p-0 font-normal";
  return (
    <table className="h-[101px] w-[165px] shrink-0 table-fixed border-l border-t border-[#696969] bg-white text-center">
      <colgroup>
        <col className="w-[58px]" />
        <col className="w-[56px]" />
        <col />
      </colgroup>
      <tbody>
        <tr className="h-6">
          <th className={head + " pl-[2px]"}>Bid</th>
          <th className={head + " pr-[14px]"}>Ask</th>
          <th className={head + " pr-[10px]"}>Last</th>
        </tr>
        <tr className="h-4 bg-[#f0fff0]"><td>1,2732</td><td>1,2734</td><td className="pl-1">1,2732</td></tr>
        <tr className="h-4"><td className="pr-[2px]">0</td><td className="pr-[2px]">0</td><td>0,1M</td></tr>
        <tr className="h-6">
          <th className={head + " pl-[3px]"}>Open</th>
          <th className={head + " pr-[14px]"}>High</th>
          <th className={head + " pr-[10px]"}>Low</th>
        </tr>
        <tr className="h-5"><td>1,2733</td><td>1,2734</td><td className="pl-1">1,2730</td></tr>
      </tbody>
    </table>
  );
}

function ControlCenter() {
  return (
    <Frame place="left-[919px] top-[660px] h-[592px] w-[1014px]" title="Control Center - 2" icon={<Swirl />}>
      <nav className="flex h-[25px] shrink-0 items-center border-b border-[#a0a0a0] bg-linear-to-r from-[#f0f0f0] to-white pl-[15px] text-xs text-black [font-family:'Open_Sans',sans-serif]">
        <button className="w-[37px] text-left">File</button>
        <button className="w-12 text-left">Tools</button>
        <button className="w-11 text-left">Help</button>
        <button className="text-left">[+/-]</button>
      </nav>
      <div className="flex min-h-0 grow flex-col bg-[#f0f0f0] text-[11px] leading-[14px] text-black [font-family:'Liberation_Sans',sans-serif]">
        <div role="tablist" className="flex h-[21px] shrink-0 items-end border-t border-[#808080] pl-[2px]">
          {TABS.map(([label, width], i) => (
            <button
              key={label}
              role="tab"
              aria-selected={i === 0}
              className={
                (i === 0
                  ? "h-5 border border-b-0 border-white bg-white pb-1 "
                  : "h-[18px] border border-b-0 border-l-2 border-[#8c8e94] bg-linear-to-b from-[#f3f3f3] to-[#d4d4d4] ") +
                "whitespace-nowrap text-center " + (label === "Log" ? "pr-3 " : "") + width
              }
            >
              {label}
            </button>
          ))}
        </div>
        <div className="flex min-h-0 grow flex-col border-b border-l-[5px] border-t-2 border-[#8c8e94] border-l-white bg-white pl-[2px]">
          <div className="flex shrink-0 gap-[2px] bg-[#f0f0f0] pb-[2px] pt-px">
            <Quotes />
            <div className="grid grow grid-cols-[224px_1fr] border-l-2 border-t border-[#808080] border-t-[#696969]">
              <div className="flex flex-col gap-[3px] pl-[9px] pt-[22px]">
                <div className="flex items-center">
                  <label htmlFor="type" className="w-[67px] pt-[6px]">Type:</label>
                  <Dropdown id="type" width="w-[148px]" value="<Default>" />
                </div>
                <div className="flex items-center">
                  <label htmlFor="name" className="w-[67px] pt-[6px]">Name:</label>
                  <Dropdown id="name" width="w-[148px]" value="$EURUSD" />
                </div>
              </div>
              <div className="pl-2 pt-[2px]">
                <div className="flex gap-2">
                  <Field id="order-type" label="Order Type:"><Dropdown id="order-type" width="w-[88px]" value="Limit" /></Field>
                  <div className="flex gap-[6px]">
                    <Field id="qty" label="Qty:"><Spinner id="qty" width="w-[70px]" value="0,1M" /></Field>
                    <Field id="limit" label="Limit Price:"><Spinner id="limit" width="w-20" value="1,2734" /></Field>
                  </div>
                  <Field id="stop" label="Stop Price:" muted><Spinner id="stop" width="w-20" value="0" disabled /></Field>
                  <Field id="tif" label="TIF:"><Dropdown id="tif" width="w-[72px]" value="Gtc" /></Field>
                  <Field id="oco" label="OCO:"><input id="oco" className="h-5 w-14 border border-[#e3e9ef] bg-white" /></Field>
                  <Field id="account" label="Account:" muted><Dropdown id="account" width="w-20" value="Sim101" disabled /></Field>
                </div>
                <div className="flex gap-[86px] pl-[39px] pt-[23px]">
                  <button className="h-[25px] w-[86px] rounded-[3px] border border-[#707070] bg-[#f0fff0] shadow-[inset_0_0_0_1px_#fff,inset_0_0_0_2px_#d8d8d8]">Buy</button>
                  <button className="h-[25px] w-[86px] rounded-[3px] border border-[#707070] bg-[#fff0f5] shadow-[inset_0_0_0_1px_#fff,inset_0_0_0_2px_#d8d8d8]">Sell</button>
                </div>
              </div>
            </div>
          </div>
          <div className="mb-1 grow border-l-2 border-t-2 border-[#4a4a4a] bg-[#a9a9a9]">
            <table className="w-full table-fixed border-separate border-spacing-0 whitespace-nowrap text-center">
              <colgroup>
                {ORDER.slice(0, 22).map(([h]) => <col key={h} className="w-[42px]" />)}
                <col />
              </colgroup>
              <thead>
                <tr className="h-5">
                  {ORDER.map(([h]) => (
                    <th key={h} className="border-b border-r border-[#d5d8dc] bg-linear-to-b from-white to-[#f1f2f4] p-0 pl-[2px] font-normal">
                      {h}
                    </th>
                  ))}
                </tr>
              </thead>
              <tbody>
                <tr className="h-[22px]">
                  {ORDER.map(([h, v], i) => (
                    <td
                      key={h}
                      className={
                        "border-b border-r border-[#696969] p-0 " +
                        (i < 20 ? "pl-[2px] " : "") +
                        (h === "State" ? "bg-[#add8e6]" : "bg-white")
                      }
                    >
                      {i >= 20 ? (
                        <button className="mx-px block h-[19px] w-[39px] min-w-[calc(100%-3px)] rounded-[3px] border border-[#707070] bg-linear-to-b from-[#f2f2f2] to-[#cfcfcf] shadow-[inset_0_0_0_1px_#fff]">
                          {v}
                        </button>
                      ) : (
                        v
                      )}
                    </td>
                  ))}
                </tr>
              </tbody>
            </table>
            <div className="ml-[213px] mt-[23px] w-[520px] font-bold text-[#b80d0d] [font-family:'Liberation_Serif',serif] [text-shadow:1px_1px_1px_#000,-1px_0_0_#3a0000]">
              <p className="whitespace-nowrap text-[22px] leading-[26px]">WWW.TRADING-SOFTWARE-COLLECTION.COM</p>
              <p className="flex justify-between whitespace-nowrap text-[19px] leading-5">
                <span>ANDREYBBRV@GMAIL.COM</span>
                <span>SKYPE: ANDREYBBRV</span>
              </p>
            </div>
          </div>
        </div>
        <footer className="mt-[3px] flex h-[23px] shrink-0 gap-[2px] border-t border-[#8c8e94] bg-[#f5f3f3] pb-[3px] pt-[2px]">
          <span className="border-l border-t border-[#808080] bg-[#90ee90] px-[3px] py-px">Connected - IQFeed</span>
          <span className="grow border-l border-t border-[#808080] bg-[#f0eceb]" />
        </footer>
      </div>
    </Frame>
  );
}

/* ---------- desktop ---------- */

const DESKTOP_LABELS: [string, string][] = [
  ["& popular", "left-[360px]"],
  ["реквизиты", "left-[657px]"],
  ["Handling", "left-[812px]"],
  ["buyer", "left-[971px]"],
];

export default function App() {
  return (
    <main className="relative h-screen w-full overflow-hidden bg-[#0a3a75]">
      {DESKTOP_LABELS.map(([text, place]) => (
        <span key={text} className={"absolute -top-1 text-xs leading-4 text-white [font-family:'Open_Sans',sans-serif] " + place}>
          {text}
        </span>
      ))}

      <section className="absolute left-[1587px] top-[1200px] flex h-[73px] w-[340px] border border-[#555] bg-[#dcdfe1] p-1 shadow-[0_3px_8px_rgba(0,0,0,0.5)]">
        <div className="flex grow items-end gap-[58px] border border-[#444] bg-linear-to-b from-[#c4c8cb] to-[#d8dbdd] pb-2 pl-[21px]">
          <span className="mb-px h-10 w-16 border-b-2 border-r border-black bg-[#cfd2d0]" />
          <span className="text-lg font-bold leading-4 text-[#666a6c] [font-family:Roboto,sans-serif]">□ MULTI-BROKER</span>
        </div>
      </section>

      <ChartWindow />
      <SalesTape />
      <ReconTape />
      <ControlCenter />
      <Ladder place="left-[1189px] top-[14px] h-[619px] w-[621px]" />
      <StrengthMeter />
      <Ladder place="left-[521px] top-[13px] h-[619px] w-[621px]" active />

      <svg
        className="pointer-events-none absolute left-[880px] top-[100px] h-[180px] w-[950px] drop-shadow-[2px_5px_3px_rgba(0,0,0,0.5)]"
        viewBox="0 0 950 180"
        aria-hidden="true"
      >
        <path d="M13 15.500L914 142.500" stroke="#e84a42" strokeWidth="11" strokeLinecap="round" />
        <path d="M914.500 128L942 146.500 910 157Z" fill="#e84a42" />
      </svg>
    </main>
  );
}
